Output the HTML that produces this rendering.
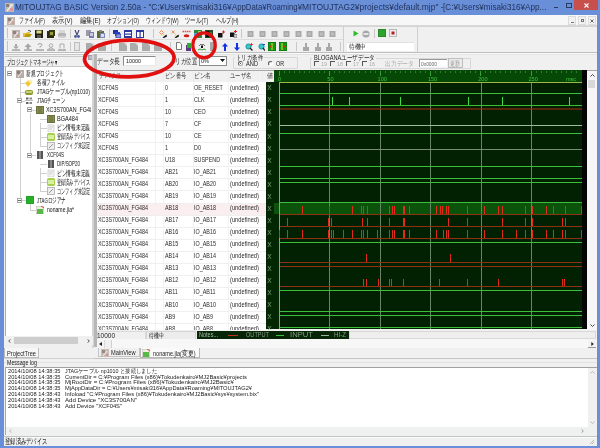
<!DOCTYPE html>
<html><head><meta charset="utf-8">
<style>
*{margin:0;padding:0;box-sizing:border-box}
html,body{width:600px;height:448px;overflow:hidden}
body{position:relative;background:#6a8fd9;font-family:"Liberation Sans",sans-serif;color:#222}
.a{position:absolute}
.t{position:absolute;white-space:nowrap;line-height:1}
.ui{font-size:6.5px;color:#333;transform:scaleX(.85);transform-origin:0 0}
.tb{font-size:6.5px;color:#222;transform:scaleX(.86);transform-origin:0 0}
.lg{font-size:6px;color:#222;transform:scaleX(.95);transform-origin:0 0}
.ic{position:absolute;width:8px;height:8px}
.gt{font-size:6.5px;color:#2a2a2a;transform:scaleX(.83);transform-origin:0 0}
#wrap{position:absolute;left:0;top:0;width:600px;height:448px;filter:blur(0.4px)}
</style></head><body><div id="wrap">

<svg class="a" style="left:5px;top:3px" width="9" height="9" viewBox="0 0 9 9"><rect width="9" height="9" fill="#c4b8b0"/><rect x="1" y="1" width="3" height="3" fill="#8a7f7a"/><path d="M2 8L7 2" stroke="#f4f0f0" stroke-width="1.2"/><rect x="5" y="5" width="3" height="3" fill="#d89a9a"/><rect x="5" y="1" width="3" height="2" fill="#e8e0d8"/></svg>
<div class="t" w="216.7" style="left:15px;top:3.2px;font-size:8.8px;color:#1f3057">MITOUJTAG BASIC Version 2.50a - "C:¥Users¥misaki316¥</div>
<div class="t" w="70.0" style="left:231.7px;top:3.2px;font-size:8.8px;color:#1f3057">AppData¥Roaming¥</div>
<div class="t" w="141.6" style="left:301.7px;top:3.2px;font-size:8.8px;color:#1f3057">MITOUJTAG2¥projects¥default.mjp" - </div>
<div class="t" w="103.4" style="left:443.3px;top:3.2px;font-size:8.8px;color:#1f3057">[C:¥Users¥misaki316¥App...</div>
<div class="a" style="left:553.5px;top:6.5px;width:4px;height:1.5px;background:#2a3a60"></div>
<div class="a" style="left:565.5px;top:3px;width:6px;height:5px;border:1px solid #2a3a60;border-top-width:1.5px"></div>
<div class="a" style="left:573.5px;top:0;width:24px;height:10.3px;background:#c8504c"></div>
<svg class="a" style="left:583.5px;top:3px" width="5" height="5"><path d="M0.5 0.5L4.5 4.5M4.5 0.5L0.5 4.5" stroke="#fff" stroke-width="1.1"/></svg>
<div class="a" style="left:4px;top:15px;width:592.8px;height:431px;background:#f0f0f0"></div>
<div class="a" style="left:4px;top:15px;width:592.8px;height:11px;background:#f7f7f7;border-bottom:1px solid #d8d8d8"></div>
<svg class="a" style="left:7px;top:16.5px" width="8" height="8" viewBox="0 0 8 8"><rect width="8" height="8" fill="#c0b4ac"/><rect x="1" y="1" width="3" height="3" fill="#8a7f7a"/><path d="M2 7L6 2" stroke="#f4f0f0" stroke-width="1.1"/><rect x="5" y="5" width="2" height="2" fill="#d89a9a"/></svg>
<div class="t" w="25.75" style="left:18.75px;top:17.3px;font-size:7.8px;color:#1a1a1a">ファイル(F)</div>
<div class="t" w="20.5" style="left:52px;top:17.3px;font-size:7.8px;color:#1a1a1a">表示(V)</div>
<div class="t" w="20.5" style="left:79.5px;top:17.3px;font-size:7.8px;color:#1a1a1a">編集(E)</div>
<div class="t" w="31.75" style="left:107px;top:17.3px;font-size:7.8px;color:#1a1a1a">オプション(O)</div>
<div class="t" w="32.5" style="left:145.8px;top:17.3px;font-size:7.8px;color:#1a1a1a">ウィンドウ(W)</div>
<div class="t" w="23.3" style="left:185px;top:17.3px;font-size:7.8px;color:#1a1a1a">ツール(T)</div>
<div class="t" w="22.5" style="left:215.8px;top:17.3px;font-size:7.8px;color:#1a1a1a">ヘルプ(H)</div>
<div class="a" style="left:568.3px;top:16px;width:8px;height:9px;background:#f2f2f2;border:1px solid #dcdcdc"></div>
<div class="a" style="left:577.7px;top:16px;width:8px;height:9px;background:#f2f2f2;border:1px solid #dcdcdc"></div>
<div class="a" style="left:587.7px;top:16px;width:8px;height:9px;background:#f2f2f2;border:1px solid #dcdcdc"></div>
<div class="a" style="left:570.5px;top:22px;width:3.5px;height:1px;background:#777"></div>
<div class="a" style="left:580.5px;top:18.5px;width:3.5px;height:3.5px;border:1px solid #777"></div>
<svg class="a" style="left:590px;top:18.5px" width="4" height="4"><path d="M0.5 0.5L3.5 3.5M3.5 0.5L0.5 3.5" stroke="#555" stroke-width="0.9"/></svg>
<div class="a" style="left:4px;top:26px;width:592.8px;height:1px;background:#d4d4d4"></div>
<div class="a" style="left:4px;top:39px;width:339px;height:1px;background:#dcdcdc"></div>
<div class="a" style="left:4px;top:52px;width:592.8px;height:1px;background:#bdbdbd"></div>
<div class="a" style="left:4px;top:53px;width:592.8px;height:1px;background:#fafafa"></div>
<div class="a" style="left:6.5px;top:28px;width:1px;height:10px;background:#c4c4c4"></div>
<div class="a" style="left:6.5px;top:41px;width:1px;height:10px;background:#c4c4c4"></div>
<div class="a" style="left:342.5px;top:27px;width:1px;height:25px;background:#cfcfcf"></div>
<div class="a" style="left:416.5px;top:27px;width:1px;height:25px;background:#cfcfcf"></div>
<div class="a" style="left:69.5px;top:29px;width:1px;height:9px;background:#c8c8c8"></div>
<div class="a" style="left:108.5px;top:29px;width:1px;height:9px;background:#c8c8c8"></div>
<div class="a" style="left:152.5px;top:29px;width:1px;height:9px;background:#c8c8c8"></div>
<div class="a" style="left:241px;top:29px;width:1px;height:9px;background:#c8c8c8"></div>
<div class="a" style="left:69.5px;top:42px;width:1px;height:9px;background:#c8c8c8"></div>
<div class="a" style="left:111px;top:42px;width:1px;height:9px;background:#c8c8c8"></div>
<div class="a" style="left:170px;top:42px;width:1px;height:9px;background:#c8c8c8"></div>
<div class="a" style="left:295.5px;top:42px;width:1px;height:9px;background:#c8c8c8"></div>
<div class="a" style="left:340px;top:42px;width:1px;height:9px;background:#c8c8c8"></div>
<div class="a" style="left:373.5px;top:29px;width:1px;height:9px;background:#c8c8c8"></div>
<svg class="a" style="left:11.5px;top:29.5px" width="8" height="8" viewBox="0 0 8 8"><rect x="0" y="0" width="8" height="8" fill="#bdb2ac"/><rect x="1" y="1" width="3" height="3" fill="#8f8580"/><path d="M2 7L6 2" stroke="#fff" stroke-width="1"/><rect x="5" y="5" width="2" height="2" fill="#d09090"/></svg>
<svg class="a" style="left:23px;top:29.5px" width="9" height="8" viewBox="0 0 9 8"><path d="M0 3H3L4 2H7V7H0Z" fill="#e2c23a"/><path d="M1 7L3 4H9L7 7Z" fill="#b59a10"/><path d="M5 0L8 1.5" stroke="#333" stroke-width="1"/></svg>
<svg class="a" style="left:35px;top:29.5px" width="8" height="8" viewBox="0 0 8 8"><rect x="0" y="0" width="8" height="8" fill="#202010"/><rect x="1.5" y="0.5" width="5" height="3" fill="#d8d880"/><rect x="2" y="5" width="4" height="3" fill="#555"/></svg>
<svg class="a" style="left:47px;top:29.5px" width="8" height="8" viewBox="0 0 8 8"><rect x="0" y="1" width="7" height="7" fill="#2a2a10"/><rect x="2" y="0" width="6" height="6" fill="#3b3b12"/><rect x="3" y="2" width="3" height="3" fill="#9a9a40"/></svg>
<svg class="a" style="left:58px;top:29.5px" width="8" height="8" viewBox="0 0 8 8"><rect x="1" y="0" width="6" height="3" fill="#d8d8d8"/><rect x="0" y="3" width="8" height="4" rx="1" fill="#b6b6b6"/><rect x="1" y="6" width="6" height="2" fill="#cfcfcf"/></svg>
<svg class="a" style="left:73.5px;top:29.5px" width="6" height="8" viewBox="0 0 6 8"><path d="M1 0L3 5L5 0" stroke="#4a4a7a" stroke-width="1.2" fill="none"/><circle cx="1.5" cy="6.5" r="1.4" fill="#4d5a9a"/><circle cx="4.5" cy="6.5" r="1.4" fill="#4d5a9a"/></svg>
<svg class="a" style="left:85.5px;top:29.5px" width="8" height="8" viewBox="0 0 8 8"><rect x="0" y="0" width="5" height="6" fill="#9a9aa8"/><rect x="3" y="2" width="5" height="6" fill="#7b7bb0"/><rect x="4" y="3" width="3" height="3" fill="#c8c8e0"/></svg>
<svg class="a" style="left:97px;top:29.5px" width="8" height="8" viewBox="0 0 8 8"><rect x="0" y="1" width="7" height="7" fill="#5d6a30"/><rect x="2" y="0" width="3" height="2" fill="#888"/><rect x="3" y="3" width="5" height="5" fill="#7c8ab8"/><rect x="4" y="4" width="3" height="3" fill="#dde"/></svg>
<svg class="a" style="left:113px;top:29.5px" width="8" height="8" viewBox="0 0 8 8"><rect x="0" y="0" width="5" height="4" fill="#2233aa"/><rect x="2" y="2" width="5" height="4" fill="#3344bb"/><rect x="3" y="4" width="5" height="4" fill="#8899dd" stroke="#2233aa" stroke-width="0.8"/></svg>
<svg class="a" style="left:124px;top:29.5px" width="8" height="8" viewBox="0 0 8 8"><rect x="0.5" y="0.5" width="7" height="7" fill="#fff" stroke="#2a3aa0"/><rect x="0" y="0" width="8" height="2" fill="#2a3aa0"/><rect x="0" y="3.5" width="8" height="1.2" fill="#2a3aa0"/><rect x="0" y="6" width="8" height="2" fill="#2a3aa0"/></svg>
<svg class="a" style="left:135.5px;top:29.5px" width="8" height="8" viewBox="0 0 8 8"><rect x="0.5" y="0.5" width="7" height="7" fill="#fff" stroke="#2a3aa0"/><rect x="0" y="0" width="8" height="2" fill="#2a3aa0"/><rect x="3.5" y="0" width="1.2" height="8" fill="#2a3aa0"/></svg>
<svg class="a" style="left:158.5px;top:29.5px" width="8" height="8" viewBox="0 0 8 8"><path d="M2.5 0.5L4.5 2.5L2.5 4.5L0.5 2.5Z" fill="none" stroke="#f08040" stroke-width="0.9"/><path d="M3.5 7.5L7.5 4.5L8 6.5L5 8Z" fill="#111"/><path d="M3 5L5 4L5.5 5.5Z" fill="#f0d020"/></svg>
<svg class="a" style="left:170.5px;top:29.5px" width="8" height="8" viewBox="0 0 8 8"><path d="M0.5 0.5L3.5 3.5M3.5 0.5L0.5 3.5" stroke="#f08040" stroke-width="0.9"/><path d="M3.5 7.5L7.5 4.5L8 6.5L5 8Z" fill="#111"/><path d="M3 5L5 4L5.5 5.5Z" fill="#f0d020"/></svg>
<svg class="a" style="left:181.5px;top:29.5px" width="9" height="8" viewBox="0 0 9 8"><path d="M0.5 1.5H8.5" stroke="#e85050" stroke-width="1.4" stroke-dasharray="1.6 0.6"/><ellipse cx="4.5" cy="5.8" rx="2.8" ry="1.5" fill="#d81818"/></svg>
<svg class="a" style="left:193.5px;top:29.5px" width="8" height="8" viewBox="0 0 8 8"><rect x="0" y="0" width="8" height="8" fill="#2a8a3a"/><rect x="0" y="3" width="3" height="5" fill="#4aa0e0"/><rect x="4" y="1" width="3" height="3" fill="#9ad07a"/></svg>
<svg class="a" style="left:204.5px;top:29.5px" width="8" height="8" viewBox="0 0 8 8"><rect x="0" y="0" width="8" height="8" fill="#234a23"/><rect x="1" y="1" width="3" height="6" fill="#111"/><rect x="5" y="2" width="2" height="4" fill="#3d7a3d"/></svg>
<svg class="a" style="left:216.5px;top:29.5px" width="8" height="8" viewBox="0 0 8 8"><rect x="1" y="3" width="4.5" height="4.5" fill="#111"/><path d="M6.5 0.5V3.5M5 2H8" stroke="#e02020" stroke-width="1"/></svg>
<svg class="a" style="left:228.5px;top:29.5px" width="8" height="8" viewBox="0 0 8 8"><rect x="1" y="2.5" width="4.5" height="4.5" fill="#111"/><path d="M6.5 0V3M5 1.5H8" stroke="#e02020" stroke-width="1"/><rect x="5" y="4.5" width="3" height="3.5" fill="#ccc" stroke="#666" stroke-width="0.6"/></svg>
<svg class="a" style="left:246.5px;top:29.5px" width="7" height="8" viewBox="0 0 7 8"><rect x="0.5" y="1" width="6" height="6" fill="#a8a8a8"/><rect x="2" y="2.5" width="3" height="3" fill="#bdbdbd"/></svg>
<svg class="a" style="left:258.5px;top:29.5px" width="7" height="8" viewBox="0 0 7 8"><rect x="0.5" y="1" width="6" height="6" fill="#a8a8a8"/><rect x="2" y="2.5" width="3" height="3" fill="#bdbdbd"/></svg>
<svg class="a" style="left:271px;top:29.5px" width="7" height="8" viewBox="0 0 7 8"><rect x="0.5" y="1" width="6" height="6" fill="#a8a8a8"/><rect x="2" y="2.5" width="3" height="3" fill="#bdbdbd"/></svg>
<svg class="a" style="left:283px;top:29.5px" width="7" height="8" viewBox="0 0 7 8"><rect x="0.5" y="1" width="6" height="6" fill="#a8a8a8"/><rect x="2" y="2.5" width="3" height="3" fill="#bdbdbd"/></svg>
<svg class="a" style="left:294.5px;top:29.5px" width="7" height="8" viewBox="0 0 7 8"><rect x="0.5" y="1" width="6" height="6" fill="#a8a8a8"/><rect x="2" y="2.5" width="3" height="3" fill="#bdbdbd"/></svg>
<svg class="a" style="left:306px;top:29.5px" width="7" height="8" viewBox="0 0 7 8"><rect x="0.5" y="1" width="6" height="6" fill="#a8a8a8"/><rect x="2" y="2.5" width="3" height="3" fill="#bdbdbd"/></svg>
<svg class="a" style="left:317.5px;top:29.5px" width="7" height="8" viewBox="0 0 7 8"><rect x="0.5" y="1" width="6" height="6" fill="#a8a8a8"/><rect x="2" y="2.5" width="3" height="3" fill="#bdbdbd"/></svg>
<svg class="a" style="left:329px;top:29.5px" width="7" height="8" viewBox="0 0 7 8"><rect x="0.5" y="1" width="6" height="6" fill="#a8a8a8"/><rect x="2" y="2.5" width="3" height="3" fill="#bdbdbd"/></svg>
<svg class="a" style="left:353px;top:30.0px" width="6" height="7" viewBox="0 0 6 7"><path d="M0.5 0.5L5.5 3.5L0.5 6.5Z" fill="#28c028"/></svg>
<svg class="a" style="left:361.5px;top:29.5px" width="8" height="8" viewBox="0 0 8 8"><circle cx="4" cy="4" r="3.6" fill="#a8a8a8"/><rect x="1.5" y="3.3" width="5" height="1.4" fill="#fff"/></svg>
<svg class="a" style="left:377.5px;top:29.0px" width="8" height="8" viewBox="0 0 8 8"><rect x="0" y="0" width="8" height="8" rx="1" fill="#2ea32e" stroke="#1c6c1c" stroke-width="0.8"/></svg>
<svg class="a" style="left:388.5px;top:29.0px" width="8" height="8" viewBox="0 0 8 8"><rect x="0.5" y="0.5" width="7" height="7" fill="#eee" stroke="#aaa" stroke-width="0.8"/><rect x="2.5" y="2.5" width="3" height="3" fill="#b81e1e"/></svg>
<svg class="a" style="left:11.5px;top:42.5px" width="8" height="8" viewBox="0 0 8 8"><rect x="3" y="1" width="2" height="2.5" fill="#a4a4a4"/><path d="M1 3.5H7L4 6Z" fill="#a4a4a4"/><rect x="0" y="6.3" width="8" height="1.5" fill="#a4a4a4"/></svg>
<svg class="a" style="left:23.5px;top:42.5px" width="8" height="8" viewBox="0 0 8 8"><path d="M4 0.5L7.5 4H0.5Z" fill="#a4a4a4"/><rect x="2.8" y="4" width="2.4" height="2.3" fill="#a4a4a4"/><rect x="0" y="6.3" width="8" height="1.5" fill="#a4a4a4"/></svg>
<svg class="a" style="left:35.5px;top:42.5px" width="8" height="8" viewBox="0 0 8 8"><path d="M2 2Q2 0.5 4 0.5Q6 0.5 6 2Q6 3 4 3.6V4.6" stroke="#a4a4a4" stroke-width="1" fill="none"/><rect x="0" y="6.3" width="8" height="1.5" fill="#a4a4a4"/></svg>
<svg class="a" style="left:47px;top:42.5px" width="8" height="8" viewBox="0 0 8 8"><circle cx="4" cy="2.6" r="1.8" stroke="#a4a4a4" stroke-width="0.9" fill="none"/><path d="M1.5 5.8Q4 3.8 6.5 5.8" stroke="#a4a4a4" stroke-width="0.9" fill="none"/><rect x="0" y="6.3" width="8" height="1.5" fill="#a4a4a4"/></svg>
<svg class="a" style="left:58px;top:42.5px" width="8" height="8" viewBox="0 0 8 8"><path d="M2 5.5V1H6V5.5" stroke="#a4a4a4" stroke-width="0.9" fill="none"/><rect x="0" y="6.3" width="8" height="1.5" fill="#a4a4a4"/></svg>
<svg class="a" style="left:74px;top:42.0px" width="6" height="9" viewBox="0 0 6 9"><rect x="0.5" y="0.5" width="5" height="8" fill="#e6e6e6" stroke="#bcbcbc"/></svg>
<svg class="a" style="left:86px;top:42.5px" width="8" height="8" viewBox="0 0 8 8"><rect x="0" y="0" width="8" height="8" fill="#ababab"/><path d="M5 0L8 3V0Z" fill="#ddd"/></svg>
<svg class="a" style="left:97.5px;top:42.5px" width="8" height="8" viewBox="0 0 8 8"><rect x="0" y="0" width="8" height="8" fill="#ababab"/><path d="M5 0L8 3V0Z" fill="#ddd"/></svg>
<svg class="a" style="left:118.5px;top:42.5px" width="8" height="8" viewBox="0 0 8 8"><rect x="0" y="0" width="8" height="8" fill="#ababab"/><path d="M5 0L8 3V0Z" fill="#ddd"/></svg>
<svg class="a" style="left:130px;top:42.5px" width="8" height="8" viewBox="0 0 8 8"><rect x="0" y="0" width="8" height="8" fill="#ababab"/><path d="M5 0L8 3V0Z" fill="#ddd"/></svg>
<svg class="a" style="left:142px;top:42.5px" width="8" height="8" viewBox="0 0 8 8"><rect x="0" y="0" width="8" height="8" fill="#ababab"/><path d="M5 0L8 3V0Z" fill="#ddd"/></svg>
<svg class="a" style="left:153.5px;top:42.5px" width="8" height="8" viewBox="0 0 8 8"><rect x="0" y="0" width="8" height="8" fill="#ababab"/><path d="M5 0L8 3V0Z" fill="#ddd"/></svg>
<svg class="a" style="left:175.5px;top:42.0px" width="6" height="8" viewBox="0 0 6 8"><path d="M0.5 0.5H3.8L5.5 2.2V7.5H0.5Z" fill="#fff" stroke="#555" stroke-width="0.8"/></svg>
<svg class="a" style="left:186px;top:42.5px" width="6" height="8" viewBox="0 0 6 8"><rect x="0" y="2" width="5" height="6" fill="#5a3a8a"/><rect x="1" y="0" width="4" height="5" fill="#33aa33"/></svg>
<svg class="a" style="left:198px;top:42.5px" width="8" height="8" viewBox="0 0 8 8"><path d="M1 3L3 1L4 3L5 1L7 3" stroke="#333" stroke-width="0.7" fill="none"/><rect x="3" y="3" width="2" height="2" fill="#111"/><path d="M0 7L2 6L4 7L6 6L8 7" stroke="#33a033" stroke-width="1" fill="none"/></svg>
<svg class="a" style="left:210px;top:42.0px" width="4" height="9" viewBox="0 0 4 9"><rect x="0" y="0" width="4" height="9" fill="#a8a8a8"/></svg>
<svg class="a" style="left:222px;top:42.5px" width="6" height="8" viewBox="0 0 6 8"><path d="M3 0L6 3.5H4V8H2V3.5H0Z" fill="#1230e0"/></svg>
<svg class="a" style="left:233.5px;top:42.5px" width="6" height="8" viewBox="0 0 6 8"><path d="M3 8L6 4.5H4V0H2V4.5H0Z" fill="#1230e0"/></svg>
<svg class="a" style="left:245px;top:42.5px" width="8" height="8" viewBox="0 0 8 8"><circle cx="3.5" cy="3.5" r="2.6" fill="#38c8c8" stroke="#1a8a9a" stroke-width="0.9"/><path d="M5 5L7.5 7.5" stroke="#222" stroke-width="1.3"/><path d="M6.5 0V3M5 1.5H8" stroke="#e03030" stroke-width="0.9"/></svg>
<svg class="a" style="left:257.5px;top:42.5px" width="7" height="8" viewBox="0 0 7 8"><circle cx="3.5" cy="3.5" r="2.6" fill="#38c8c8" stroke="#1a8a9a" stroke-width="0.9"/><path d="M5 5L7 7.5" stroke="#222" stroke-width="1.3"/><path d="M4.5 1.5H7" stroke="#2030c0" stroke-width="0.9"/></svg>
<svg class="a" style="left:267.5px;top:42.0px" width="8" height="9" viewBox="0 0 8 9"><rect x="0" y="0" width="8" height="9" fill="#109a10" stroke="#0a5a0a" stroke-width="0.7"/><rect x="3.5" y="1" width="1" height="7" fill="#f0e040"/><path d="M1 4.5L3.5 3V6Z" fill="#e02020"/></svg>
<svg class="a" style="left:279px;top:42.0px" width="8" height="9" viewBox="0 0 8 9"><rect x="0" y="0" width="8" height="9" fill="#109a10" stroke="#0a5a0a" stroke-width="0.7"/><rect x="2.5" y="1" width="1" height="7" fill="#f0e040"/><path d="M7 4.5L4 3V6Z" fill="#e02020"/></svg>
<svg class="a" style="left:301.5px;top:42.5px" width="8" height="8" viewBox="0 0 8 8"><rect x="3" y="0" width="2" height="4" fill="#a8a8a8"/><rect x="1" y="4" width="6" height="4" fill="#a8a8a8"/></svg>
<svg class="a" style="left:313.5px;top:42.5px" width="8" height="8" viewBox="0 0 8 8"><rect x="3" y="0" width="2" height="4" fill="#a8a8a8"/><rect x="1" y="4" width="6" height="4" fill="#a8a8a8"/></svg>
<svg class="a" style="left:325px;top:42.5px" width="8" height="8" viewBox="0 0 8 8"><rect x="3" y="0" width="2" height="4" fill="#a8a8a8"/><rect x="1" y="4" width="6" height="4" fill="#a8a8a8"/></svg>
<div class="a" style="left:347px;top:42px;width:67px;height:9px;background:#fff;border-top:1px solid #e0e0e0"></div>
<div class="t" w="17" style="left:348.5px;top:43px;font-size:7px;color:#222">待機中</div>
<div class="a" style="left:5px;top:54px;width:83px;height:1px;background:#c8c8c8"></div>
<div class="a" style="left:5px;top:56px;width:83px;height:1px;background:#c8c8c8"></div>
<div class="a" style="left:88px;top:54.5px;width:5px;height:5px;background:#b8b8c8;border:1px solid #9a9aaa"></div>
<div class="t" w="50" style="left:7px;top:59px;font-size:7.6px;color:#111">プロジェクトマネージャ▾</div>
<div class="a" style="left:4px;top:66px;width:89px;height:1px;background:#c9c9c9"></div>
<div class="a" style="left:4.5px;top:66.5px;width:88px;height:269px;background:#fff"></div>
<div class="a" style="left:5px;top:66.5px;width:1px;height:269px;background:#ababab"></div>
<div class="a" style="left:92px;top:54px;width:2px;height:294px;background:#d4d4d4"></div>
<div class="a" style="left:19.5px;top:77.5px;width:1px;height:122.98000000000002px;background:#d0d0d0"></div>
<div class="a" style="left:29.5px;top:112.78px;width:1px;height:42.349999999999994px;background:#d0d0d0"></div>
<div class="a" style="left:39.5px;top:122.85px;width:1px;height:23.210000000000008px;background:#d0d0d0"></div>
<div class="a" style="left:39.5px;top:168.2px;width:1px;height:23.210000000000008px;background:#d0d0d0"></div>
<div class="a" style="left:19.5px;top:82.57px;width:5.5px;height:1px;background:#d0d0d0"></div>
<div class="a" style="left:19.5px;top:91.64px;width:5.5px;height:1px;background:#d0d0d0"></div>
<div class="a" style="left:22px;top:100.71000000000001px;width:3px;height:1px;background:#d0d0d0"></div>
<div class="a" style="left:32px;top:109.78px;width:4px;height:1px;background:#d0d0d0"></div>
<div class="a" style="left:39.5px;top:118.85px;width:7.5px;height:1px;background:#d0d0d0"></div>
<div class="a" style="left:39.5px;top:127.92px;width:7.5px;height:1px;background:#d0d0d0"></div>
<div class="a" style="left:39.5px;top:136.99px;width:7.5px;height:1px;background:#d0d0d0"></div>
<div class="a" style="left:39.5px;top:146.06px;width:7.5px;height:1px;background:#d0d0d0"></div>
<div class="a" style="left:32px;top:155.13px;width:4px;height:1px;background:#d0d0d0"></div>
<div class="a" style="left:39.5px;top:164.2px;width:7.5px;height:1px;background:#d0d0d0"></div>
<div class="a" style="left:39.5px;top:173.27px;width:7.5px;height:1px;background:#d0d0d0"></div>
<div class="a" style="left:39.5px;top:182.34px;width:7.5px;height:1px;background:#d0d0d0"></div>
<div class="a" style="left:39.5px;top:191.41px;width:7.5px;height:1px;background:#d0d0d0"></div>
<div class="a" style="left:22px;top:200.48000000000002px;width:4px;height:1px;background:#d0d0d0"></div>
<div class="a" style="left:29.5px;top:204.48000000000002px;width:1px;height:5.069999999999993px;background:#d0d0d0"></div>
<div class="a" style="left:29.5px;top:209.55px;width:6.5px;height:1px;background:#d0d0d0"></div>
<div class="a" style="left:7.0px;top:71.0px;width:5px;height:5px;border:1px solid #a8a8a8;background:#fff"></div>
<div class="a" style="left:8.0px;top:73.0px;width:3px;height:1px;background:#666"></div>
<div class="a" style="left:17.0px;top:98.21000000000001px;width:5px;height:5px;border:1px solid #a8a8a8;background:#fff"></div>
<div class="a" style="left:18.0px;top:100.21000000000001px;width:3px;height:1px;background:#666"></div>
<div class="a" style="left:27.0px;top:107.28px;width:5px;height:5px;border:1px solid #a8a8a8;background:#fff"></div>
<div class="a" style="left:28.0px;top:109.28px;width:3px;height:1px;background:#666"></div>
<div class="a" style="left:27.0px;top:152.63px;width:5px;height:5px;border:1px solid #a8a8a8;background:#fff"></div>
<div class="a" style="left:28.0px;top:154.63px;width:3px;height:1px;background:#666"></div>
<div class="a" style="left:17.0px;top:197.98000000000002px;width:5px;height:5px;border:1px solid #a8a8a8;background:#fff"></div>
<div class="a" style="left:18.0px;top:199.98000000000002px;width:3px;height:1px;background:#666"></div>
<svg class="a" style="left:16px;top:69.5px" width="8" height="8" viewBox="0 0 8 8"><rect width="8" height="8" fill="#b8aca6"/><rect x="1" y="1" width="3" height="3" fill="#8a807a"/><path d="M2 7L6 2" stroke="#eee"/></svg>
<div class="a" style="left:26px;top:69.5px;width:65px;height:9px;overflow:hidden"><div class="t" w="38" style="left:0;top:0.3px;font-size:7.6px;color:#111">新規プロジェクト</div></div>
<svg class="a" style="left:25px;top:78.57px" width="8" height="8" viewBox="0 0 8 8"><path d="M0 4L4 1L7 3L3 8Z" fill="#f0c830"/><path d="M3 2L6 0L8 2L5 4Z" fill="#f8f0c0"/></svg>
<div class="a" style="left:37px;top:78.57px;width:54px;height:9px;overflow:hidden"><div class="t" w="28" style="left:0;top:0.3px;font-size:7.6px;color:#111">各種ファイル</div></div>
<svg class="a" style="left:25px;top:88.64px" width="8" height="6" viewBox="0 0 8 6"><rect x="0" y="1" width="8" height="5" rx="2" fill="#8a9a30"/><rect x="1" y="2" width="6" height="2" fill="#c8d070"/></svg>
<div class="a" style="left:37px;top:87.64px;width:54px;height:9px;overflow:hidden"><div class="t" w="53" style="left:0;top:0.3px;font-size:7.6px;color:#111">JTAGケーブル(np1010)</div></div>
<svg class="a" style="left:25px;top:96.71000000000001px" width="8" height="8" viewBox="0 0 8 8"><rect x="1" y="0.5" width="2.5" height="2" fill="#666"/><rect x="4.5" y="0.5" width="2.5" height="2" fill="#888"/><rect x="1" y="5" width="2.5" height="2" fill="#666"/><rect x="4.5" y="5" width="2.5" height="2" fill="#888"/><rect x="0" y="3" width="8" height="1" fill="#bbb"/></svg>
<div class="a" style="left:37px;top:96.71000000000001px;width:54px;height:9px;overflow:hidden"><div class="t" w="28" style="left:0;top:0.3px;font-size:7.6px;color:#111">JTAGチェーン</div></div>
<svg class="a" style="left:36px;top:105.78px" width="8" height="8" viewBox="0 0 8 8"><rect width="8" height="8" fill="#6a7040"/><rect x="1" y="1" width="6" height="6" fill="#8a9050"/><path d="M2 2H6M2 4H6M2 6H6" stroke="#5a6030" stroke-width="0.7"/></svg>
<div class="a" style="left:46px;top:105.78px;width:45px;height:9px;overflow:hidden"><div class="t" w="50" style="left:0;top:0.3px;font-size:7.6px;color:#111">XC3S700AN_FG484</div></div>
<svg class="a" style="left:47px;top:114.85px" width="8" height="8" viewBox="0 0 8 8"><rect width="8" height="8" fill="#6a7040"/><rect x="1" y="1" width="6" height="6" fill="#8a9050"/><path d="M2 2H6M2 4H6M2 6H6" stroke="#5a6030" stroke-width="0.7"/></svg>
<div class="a" style="left:57px;top:114.85px;width:34px;height:9px;overflow:hidden"><div class="t" w="21" style="left:0;top:0.3px;font-size:7.6px;color:#111">BGA484</div></div>
<svg class="a" style="left:47px;top:123.92px" width="8" height="8" viewBox="0 0 8 8"><rect x="1" y="1" width="6" height="7" fill="#f4f4f4" stroke="#c8c8c8" stroke-width="0.7"/><path d="M2 3H6M2 5H5" stroke="#bbb" stroke-width="0.7"/></svg>
<div class="a" style="left:57px;top:123.92px;width:34px;height:9px;overflow:hidden"><div class="t" w="33" style="left:0;top:0.3px;font-size:7.6px;color:#111">ピン情報未定義</div></div>
<svg class="a" style="left:47px;top:132.99px" width="8" height="8" viewBox="0 0 8 8"><rect width="8" height="8" rx="1.5" fill="#a8d050"/><rect x="1" y="2" width="6" height="4" fill="#d8f0a0"/></svg>
<div class="a" style="left:57px;top:132.99px;width:34px;height:9px;overflow:hidden"><div class="t" w="33" style="left:0;top:0.3px;font-size:7.6px;color:#111">登録済みデバイス</div></div>
<svg class="a" style="left:47px;top:142.06px" width="8" height="8" viewBox="0 0 8 8"><rect x="0.5" y="0.5" width="7" height="7" fill="#eee" stroke="#aaa" stroke-width="0.8"/><path d="M2 6L6 2" stroke="#999"/></svg>
<div class="a" style="left:57px;top:142.06px;width:34px;height:9px;overflow:hidden"><div class="t" w="33" style="left:0;top:0.3px;font-size:7.6px;color:#111">コンフィグ未設定</div></div>
<svg class="a" style="left:37px;top:151.13px" width="6" height="8" viewBox="0 0 6 8"><rect width="6" height="8" fill="#555"/><rect x="2" y="0" width="2" height="8" fill="#888"/></svg>
<div class="a" style="left:47px;top:151.13px;width:44px;height:9px;overflow:hidden"><div class="t" w="17" style="left:0;top:0.3px;font-size:7.6px;color:#111">XCF04S</div></div>
<svg class="a" style="left:48px;top:160.2px" width="6" height="8" viewBox="0 0 6 8"><rect width="6" height="8" fill="#555"/><rect x="2" y="0" width="2" height="8" fill="#888"/></svg>
<div class="a" style="left:57px;top:160.2px;width:34px;height:9px;overflow:hidden"><div class="t" w="23" style="left:0;top:0.3px;font-size:7.6px;color:#111">DIP/SOP20</div></div>
<svg class="a" style="left:47px;top:169.27px" width="8" height="8" viewBox="0 0 8 8"><rect x="1" y="1" width="6" height="7" fill="#f4f4f4" stroke="#c8c8c8" stroke-width="0.7"/><path d="M2 3H6M2 5H5" stroke="#bbb" stroke-width="0.7"/></svg>
<div class="a" style="left:57px;top:169.27px;width:34px;height:9px;overflow:hidden"><div class="t" w="33" style="left:0;top:0.3px;font-size:7.6px;color:#111">ピン情報未定義</div></div>
<svg class="a" style="left:47px;top:178.34px" width="8" height="8" viewBox="0 0 8 8"><rect width="8" height="8" rx="1.5" fill="#a8d050"/><rect x="1" y="2" width="6" height="4" fill="#d8f0a0"/></svg>
<div class="a" style="left:57px;top:178.34px;width:34px;height:9px;overflow:hidden"><div class="t" w="33" style="left:0;top:0.3px;font-size:7.6px;color:#111">登録済みデバイス</div></div>
<svg class="a" style="left:47px;top:187.41px" width="8" height="8" viewBox="0 0 8 8"><rect x="0.5" y="0.5" width="7" height="7" fill="#eee" stroke="#aaa" stroke-width="0.8"/><path d="M2 6L6 2" stroke="#999"/></svg>
<div class="a" style="left:57px;top:187.41px;width:34px;height:9px;overflow:hidden"><div class="t" w="33" style="left:0;top:0.3px;font-size:7.6px;color:#111">コンフィグ未設定</div></div>
<svg class="a" style="left:26px;top:196.48000000000002px" width="8" height="8" viewBox="0 0 8 8"><rect width="8" height="8" rx="1" fill="#28b028" stroke="#1a801a" stroke-width="0.6"/></svg>
<div class="a" style="left:37px;top:196.48000000000002px;width:54px;height:9px;overflow:hidden"><div class="t" w="29" style="left:0;top:0.3px;font-size:7.6px;color:#111">JTAGロジアナ</div></div>
<svg class="a" style="left:36px;top:205.55px" width="8" height="8" viewBox="0 0 8 8"><rect width="8" height="8" fill="#f0f0e0" stroke="#999" stroke-width="0.6"/><rect x="1" y="3" width="6" height="5" fill="#58b848"/><path d="M5 0L8 2" stroke="#e04040"/></svg>
<div class="a" style="left:47px;top:205.55px;width:44px;height:9px;overflow:hidden"><div class="t" w="27" style="left:0;top:0.3px;font-size:7.6px;color:#111">noname.jla*</div></div>
<div class="a" style="left:4.5px;top:335.5px;width:88px;height:9.5px;background:#f0f0f0"></div>
<div class="a" style="left:14px;top:337px;width:63.5px;height:7px;background:#cdcdcd"></div>
<svg class="a" style="left:8px;top:338.5px" width="3" height="4" viewBox="0 0 3 4"><path d="M2.5 0.3L0.7 2L2.5 3.7" stroke="#444" stroke-width="0.9" fill="none"/></svg>
<svg class="a" style="left:87px;top:338.5px" width="3" height="4" viewBox="0 0 3 4"><path d="M0.5 0.3L2.3 2L0.5 3.7" stroke="#444" stroke-width="0.9" fill="none"/></svg>
<div class="a" style="left:4px;top:347.5px;width:35px;height:10px;background:#f6f6f6;border:1px solid #bcbcbc;border-top:none"></div>
<div class="t" w="29" style="left:7px;top:349.5px;font-size:7px;color:#222">ProjectTree</div>
<div class="a" style="left:4px;top:358px;width:592.8px;height:1px;background:#d2d2d2"></div>
<div class="a" style="left:4px;top:362px;width:592.8px;height:1px;background:#e2e2e2"></div>
<div class="t" w="30" style="left:7px;top:360.2px;font-size:6.3px;color:#222">Message log</div>
<div class="a" style="left:5px;top:367px;width:591.8px;height:1px;background:#a0a0a0"></div>
<div class="a" style="left:5px;top:367px;width:1px;height:68px;background:#a8a8a8"></div>
<div class="a" style="left:6px;top:368px;width:581.5px;height:58.5px;background:#fff"></div>
<div class="a" style="left:587.5px;top:368px;width:9px;height:58.5px;background:#f0f0f0"></div>
<svg class="a" style="left:589.5px;top:371px" width="5" height="3" viewBox="0 0 5 3"><path d="M0.5 2.5L2.5 0.5L4.5 2.5" stroke="#aaa" stroke-width="0.8" fill="none"/></svg>
<svg class="a" style="left:589.5px;top:421px" width="5" height="3" viewBox="0 0 5 3"><path d="M0.5 0.5L2.5 2.5L4.5 0.5" stroke="#aaa" stroke-width="0.8" fill="none"/></svg>
<div class="a" style="left:6px;top:426.5px;width:590px;height:8.5px;background:#eff0f0"></div>
<svg class="a" style="left:8.5px;top:428.5px" width="3" height="4" viewBox="0 0 3 4"><path d="M2.5 0.3L0.7 2L2.5 3.7" stroke="#aaa" stroke-width="0.8" fill="none"/></svg>
<svg class="a" style="left:580.5px;top:428.5px" width="3" height="4" viewBox="0 0 3 4"><path d="M0.5 0.3L2.3 2L0.5 3.7" stroke="#888" stroke-width="0.8" fill="none"/></svg>
<div class="a" style="left:4px;top:435.5px;width:592.8px;height:1px;background:#c4c4c4"></div>
<div class="a" style="left:4px;top:436.5px;width:592.8px;height:1px;background:#fafafa"></div>
<div class="t" w="52.5" style="left:7.5px;top:367.6px;font-size:6px;color:#222">2014/10/08 14:38:35</div>
<div class="t" w="92" style="left:64.5px;top:367.6px;font-size:6px;color:#222">JTAGケーブル np1010 と接続しました</div>
<div class="t" w="52.5" style="left:7.5px;top:373.5px;font-size:6px;color:#222">2014/10/08 14:38:35</div>
<div class="t" w="182" style="left:64.5px;top:373.5px;font-size:6px;color:#222">CurrentDir = C:¥Program Files (x86)¥Tokudenkairo¥MJ2Basic¥projects</div>
<div class="t" w="52.5" style="left:7.5px;top:379.40000000000003px;font-size:6px;color:#222">2014/10/08 14:38:35</div>
<div class="t" w="169" style="left:64.5px;top:379.40000000000003px;font-size:6px;color:#222">MjRootDir = C:¥Program Files (x86)¥Tokudenkairo¥MJ2Basic¥</div>
<div class="t" w="52.5" style="left:7.5px;top:385.3px;font-size:6px;color:#222">2014/10/08 14:38:35</div>
<div class="t" w="187" style="left:64.5px;top:385.3px;font-size:6px;color:#222">MjAppDataDir = C:¥Users¥misaki316¥AppData¥Roaming¥MITOUJTAG2¥</div>
<div class="t" w="52.5" style="left:7.5px;top:391.20000000000005px;font-size:6px;color:#222">2014/10/08 14:38:43</div>
<div class="t" w="194" style="left:64.5px;top:391.20000000000005px;font-size:6px;color:#222">Infoload "C:¥Program Files (x86)¥Tokudenkairo¥MJ2Basic¥sys¥system.bix"</div>
<div class="t" w="52.5" style="left:7.5px;top:397.1px;font-size:6px;color:#222">2014/10/08 14:38:43</div>
<div class="t" w="72" style="left:64.5px;top:397.1px;font-size:6px;color:#222">Add Device "XC3S700AN"</div>
<div class="t" w="52.5" style="left:7.5px;top:403.0px;font-size:6px;color:#222">2014/10/08 14:38:43</div>
<div class="t" w="57" style="left:64.5px;top:403.0px;font-size:6px;color:#222">Add Device "XCF04S"</div>
<div class="t" w="42" style="left:5px;top:438.3px;font-size:7.6px;color:#111">登録済みデバイス</div>
<svg class="a" style="left:589px;top:439px" width="6" height="6" viewBox="0 0 6 6"><path d="M5 1L1 5M5 3L3 5M5 5" stroke="#aaa" stroke-width="0.8"/></svg>
<div class="a" style="left:94px;top:54px;width:502.8px;height:1px;background:#e4e4e4"></div>
<div class="a" style="left:94px;top:54px;width:2.5px;height:293px;background:#b6b6b6"></div>
<div class="a" style="left:96.5px;top:70px;width:500.3px;height:1px;background:#a8a8a8"></div>
<div class="t" w="23" style="left:97px;top:57.5px;font-size:8px;color:#222">データ長</div>
<div class="a" style="left:123px;top:56px;width:33px;height:9.5px;background:#fff;border-top:1px solid #8a8a8a;border-left:1px solid #8a8a8a;border-right:1px solid #e8e8e8;border-bottom:1px solid #e8e8e8"></div>
<div class="t" w="15" style="left:125.5px;top:58px;font-size:6px;color:#222">10000</div>
<div class="t" w="27" style="left:170px;top:57.5px;font-size:8px;color:#222">トリガ位置</div>
<div class="a" style="left:199px;top:56px;width:27.5px;height:9.5px;background:#fff;border:1px solid #8a8a8a"></div>
<div class="t" w="8" style="left:201px;top:58px;font-size:6px;color:#222">0%</div>
<svg class="a" style="left:220px;top:59px" width="5" height="3" viewBox="0 0 5 3"><path d="M0 0H5L2.5 3Z" fill="#111"/></svg>
<div class="a" style="left:233px;top:57px;width:65px;height:11.5px;border:1px solid #d8d8d8;border-radius:1px"></div>
<div class="a" style="left:235px;top:54.5px;width:29px;height:5px;background:#f0f0f0"></div>
<div class="t" w="27" style="left:236px;top:54px;font-size:7px;color:#222">トリガ条件</div>
<div class="a" style="left:238px;top:61px;width:5px;height:5px;border-radius:50%;background:#fff;border:1px solid #aaa;border-left-color:#555;border-top-color:#555"></div>
<div class="a" style="left:239.6px;top:62.6px;width:1.8px;height:1.8px;border-radius:50%;background:#222"></div>
<div class="t" w="12" style="left:246px;top:60.5px;font-size:6.5px;color:#222">AND</div>
<div class="a" style="left:268px;top:61px;width:5px;height:5px;border-radius:50%;background:#fff;border:1px solid #fff;border-left-color:#555;border-top-color:#555"></div>
<div class="t" w="8" style="left:276px;top:60.5px;font-size:6.5px;color:#222">OR</div>
<div class="a" style="left:309.5px;top:58px;width:161px;height:10.5px;border:1px solid #d8d8d8"></div>
<div class="a" style="left:312px;top:54.5px;width:64px;height:5px;background:#f0f0f0"></div>
<div class="t" w="61" style="left:313.5px;top:54px;font-size:7px;color:#222">BLOGANAユーザデータ</div>
<div class="a" style="left:314px;top:60.5px;width:5px;height:5.5px;border-top:1.2px solid #555;border-left:1.2px solid #555"></div>
<div class="t" w="6" style="left:320.5px;top:60.5px;font-size:6px;color:#aaa">19</div>
<div class="a" style="left:330px;top:60.5px;width:5px;height:5.5px;border-top:1.2px solid #555;border-left:1.2px solid #555"></div>
<div class="t" w="6" style="left:336.5px;top:60.5px;font-size:6px;color:#aaa">18</div>
<div class="a" style="left:346px;top:60.5px;width:5px;height:5.5px;border-top:1.2px solid #555;border-left:1.2px solid #555"></div>
<div class="t" w="6" style="left:352.5px;top:60.5px;font-size:6px;color:#aaa">17</div>
<div class="a" style="left:362px;top:60.5px;width:5px;height:5.5px;border-top:1.2px solid #555;border-left:1.2px solid #555"></div>
<div class="t" w="6" style="left:368.5px;top:60.5px;font-size:6px;color:#aaa">16</div>
<div class="t" w="29" style="left:385px;top:59.5px;font-size:7px;color:#aaa">出力データ</div>
<div class="a" style="left:419px;top:58.5px;width:27.5px;height:8.5px;background:#fff;border-top:1px solid #999;border-left:1px solid #999"></div>
<div class="t" w="16" style="left:420.5px;top:60.5px;font-size:6px;color:#666">0x0000</div>
<div class="a" style="left:447.5px;top:58px;width:15px;height:9.5px;background:#ececec;border:1px solid #bdbdbd"></div>
<div class="t" w="10" style="left:450px;top:59.5px;font-size:7px;color:#999">更新</div>
<div class="a" style="left:96.5px;top:71px;width:177.5px;height:11px;background:#f1f1f1"></div>
<div class="t" w="22" style="left:99px;top:72.3px;font-size:7px;color:#333">デバイス</div>
<div class="t" w="21" style="left:165px;top:72.3px;font-size:7px;color:#333">ピン番号</div>
<div class="t" w="17" style="left:194px;top:72.3px;font-size:7px;color:#333">ピン名</div>
<div class="t" w="21" style="left:230px;top:72.3px;font-size:7px;color:#333">ユーザ名</div>
<div class="t" w="6" style="left:267px;top:72.3px;font-size:7px;color:#333">値</div>
<div class="a" style="left:96.5px;top:82px;width:169.5px;height:248px;background:#fff"></div>
<div class="a" style="left:96.5px;top:203px;width:169.5px;height:12px;background:#fbeeee"></div>
<div class="a" style="left:155px;top:82px;width:1px;height:248px;background:#f2f2f2"></div>
<div class="a" style="left:163px;top:82px;width:1px;height:248px;background:#f2f2f2"></div>
<div class="a" style="left:193.3px;top:82px;width:1px;height:248px;background:#f2f2f2"></div>
<div class="a" style="left:227.5px;top:82px;width:1px;height:248px;background:#f2f2f2"></div>
<div class="a" style="left:163px;top:72px;width:1px;height:10px;background:#ececec"></div>
<div class="a" style="left:193.3px;top:72px;width:1px;height:10px;background:#ececec"></div>
<div class="a" style="left:227.5px;top:72px;width:1px;height:10px;background:#ececec"></div>
<div class="a" style="left:262px;top:72px;width:1px;height:10px;background:#ececec"></div>
<div class="t gt" style="left:98px;top:84.60px">XCF04S</div>
<div class="t gt" style="left:165px;top:84.60px">0</div>
<div class="t gt" style="left:194.2px;top:84.60px">OE_RESET</div>
<div class="t gt" style="left:230px;top:84.60px;transform:scaleX(.88)">(undefined)</div>
<div class="a" style="left:96.5px;top:94.05px;width:169.5px;height:1px;background:#efefef"></div>
<div class="t gt" style="left:98px;top:96.65px">XCF04S</div>
<div class="t gt" style="left:165px;top:96.65px">1</div>
<div class="t gt" style="left:194.2px;top:96.65px">CLK</div>
<div class="t gt" style="left:230px;top:96.65px;transform:scaleX(.88)">(undefined)</div>
<div class="a" style="left:96.5px;top:106.10px;width:169.5px;height:1px;background:#efefef"></div>
<div class="t gt" style="left:98px;top:108.70px">XCF04S</div>
<div class="t gt" style="left:165px;top:108.70px">10</div>
<div class="t gt" style="left:194.2px;top:108.70px">CEO</div>
<div class="t gt" style="left:230px;top:108.70px;transform:scaleX(.88)">(undefined)</div>
<div class="a" style="left:96.5px;top:118.15px;width:169.5px;height:1px;background:#efefef"></div>
<div class="t gt" style="left:98px;top:120.75px">XCF04S</div>
<div class="t gt" style="left:165px;top:120.75px">7</div>
<div class="t gt" style="left:194.2px;top:120.75px">CF</div>
<div class="t gt" style="left:230px;top:120.75px;transform:scaleX(.88)">(undefined)</div>
<div class="a" style="left:96.5px;top:130.20px;width:169.5px;height:1px;background:#efefef"></div>
<div class="t gt" style="left:98px;top:132.80px">XCF04S</div>
<div class="t gt" style="left:165px;top:132.80px">10</div>
<div class="t gt" style="left:194.2px;top:132.80px">CE</div>
<div class="t gt" style="left:230px;top:132.80px;transform:scaleX(.88)">(undefined)</div>
<div class="a" style="left:96.5px;top:142.25px;width:169.5px;height:1px;background:#efefef"></div>
<div class="t gt" style="left:98px;top:144.85px">XCF04S</div>
<div class="t gt" style="left:165px;top:144.85px">1</div>
<div class="t gt" style="left:194.2px;top:144.85px">D0</div>
<div class="t gt" style="left:230px;top:144.85px;transform:scaleX(.88)">(undefined)</div>
<div class="a" style="left:96.5px;top:154.30px;width:169.5px;height:1px;background:#efefef"></div>
<div class="t gt" style="left:98px;top:156.90px">XC3S700AN_FG484</div>
<div class="t gt" style="left:165px;top:156.90px">U18</div>
<div class="t gt" style="left:194.2px;top:156.90px">SUSPEND</div>
<div class="t gt" style="left:230px;top:156.90px;transform:scaleX(.88)">(undefined)</div>
<div class="a" style="left:96.5px;top:166.35px;width:169.5px;height:1px;background:#efefef"></div>
<div class="t gt" style="left:98px;top:168.95px">XC3S700AN_FG484</div>
<div class="t gt" style="left:165px;top:168.95px">AB21</div>
<div class="t gt" style="left:194.2px;top:168.95px">IO_AB21</div>
<div class="t gt" style="left:230px;top:168.95px;transform:scaleX(.88)">(undefined)</div>
<div class="a" style="left:96.5px;top:178.40px;width:169.5px;height:1px;background:#efefef"></div>
<div class="t gt" style="left:98px;top:181.00px">XC3S700AN_FG484</div>
<div class="t gt" style="left:165px;top:181.00px">AB20</div>
<div class="t gt" style="left:194.2px;top:181.00px">IO_AB20</div>
<div class="t gt" style="left:230px;top:181.00px;transform:scaleX(.88)">(undefined)</div>
<div class="a" style="left:96.5px;top:190.45px;width:169.5px;height:1px;background:#efefef"></div>
<div class="t gt" style="left:98px;top:193.05px">XC3S700AN_FG484</div>
<div class="t gt" style="left:165px;top:193.05px">AB19</div>
<div class="t gt" style="left:194.2px;top:193.05px">IO_AB19</div>
<div class="t gt" style="left:230px;top:193.05px;transform:scaleX(.88)">(undefined)</div>
<div class="a" style="left:96.5px;top:202.50px;width:169.5px;height:1px;background:#efefef"></div>
<div class="t gt" style="left:98px;top:205.10px">XC3S700AN_FG484</div>
<div class="t gt" style="left:165px;top:205.10px">AB18</div>
<div class="t gt" style="left:194.2px;top:205.10px">IO_AB18</div>
<div class="t gt" style="left:230px;top:205.10px;transform:scaleX(.88)">(undefined)</div>
<div class="a" style="left:96.5px;top:214.55px;width:169.5px;height:1px;background:#efefef"></div>
<div class="t gt" style="left:98px;top:217.15px">XC3S700AN_FG484</div>
<div class="t gt" style="left:165px;top:217.15px">AB17</div>
<div class="t gt" style="left:194.2px;top:217.15px">IO_AB17</div>
<div class="t gt" style="left:230px;top:217.15px;transform:scaleX(.88)">(undefined)</div>
<div class="a" style="left:96.5px;top:226.60px;width:169.5px;height:1px;background:#efefef"></div>
<div class="t gt" style="left:98px;top:229.20px">XC3S700AN_FG484</div>
<div class="t gt" style="left:165px;top:229.20px">AB16</div>
<div class="t gt" style="left:194.2px;top:229.20px">IO_AB16</div>
<div class="t gt" style="left:230px;top:229.20px;transform:scaleX(.88)">(undefined)</div>
<div class="a" style="left:96.5px;top:238.65px;width:169.5px;height:1px;background:#efefef"></div>
<div class="t gt" style="left:98px;top:241.25px">XC3S700AN_FG484</div>
<div class="t gt" style="left:165px;top:241.25px">AB15</div>
<div class="t gt" style="left:194.2px;top:241.25px">IO_AB15</div>
<div class="t gt" style="left:230px;top:241.25px;transform:scaleX(.88)">(undefined)</div>
<div class="a" style="left:96.5px;top:250.70px;width:169.5px;height:1px;background:#efefef"></div>
<div class="t gt" style="left:98px;top:253.30px">XC3S700AN_FG484</div>
<div class="t gt" style="left:165px;top:253.30px">AB14</div>
<div class="t gt" style="left:194.2px;top:253.30px">IO_AB14</div>
<div class="t gt" style="left:230px;top:253.30px;transform:scaleX(.88)">(undefined)</div>
<div class="a" style="left:96.5px;top:262.75px;width:169.5px;height:1px;background:#efefef"></div>
<div class="t gt" style="left:98px;top:265.35px">XC3S700AN_FG484</div>
<div class="t gt" style="left:165px;top:265.35px">AB13</div>
<div class="t gt" style="left:194.2px;top:265.35px">IO_AB13</div>
<div class="t gt" style="left:230px;top:265.35px;transform:scaleX(.88)">(undefined)</div>
<div class="a" style="left:96.5px;top:274.80px;width:169.5px;height:1px;background:#efefef"></div>
<div class="t gt" style="left:98px;top:277.40px">XC3S700AN_FG484</div>
<div class="t gt" style="left:165px;top:277.40px">AB12</div>
<div class="t gt" style="left:194.2px;top:277.40px">IO_AB12</div>
<div class="t gt" style="left:230px;top:277.40px;transform:scaleX(.88)">(undefined)</div>
<div class="a" style="left:96.5px;top:286.85px;width:169.5px;height:1px;background:#efefef"></div>
<div class="t gt" style="left:98px;top:289.45px">XC3S700AN_FG484</div>
<div class="t gt" style="left:165px;top:289.45px">AB11</div>
<div class="t gt" style="left:194.2px;top:289.45px">IO_AB11</div>
<div class="t gt" style="left:230px;top:289.45px;transform:scaleX(.88)">(undefined)</div>
<div class="a" style="left:96.5px;top:298.90px;width:169.5px;height:1px;background:#efefef"></div>
<div class="t gt" style="left:98px;top:301.50px">XC3S700AN_FG484</div>
<div class="t gt" style="left:165px;top:301.50px">AB10</div>
<div class="t gt" style="left:194.2px;top:301.50px">IO_AB10</div>
<div class="t gt" style="left:230px;top:301.50px;transform:scaleX(.88)">(undefined)</div>
<div class="a" style="left:96.5px;top:310.95px;width:169.5px;height:1px;background:#efefef"></div>
<div class="t gt" style="left:98px;top:313.55px">XC3S700AN_FG484</div>
<div class="t gt" style="left:165px;top:313.55px">AB9</div>
<div class="t gt" style="left:194.2px;top:313.55px">IO_AB9</div>
<div class="t gt" style="left:230px;top:313.55px;transform:scaleX(.88)">(undefined)</div>
<div class="a" style="left:96.5px;top:323.00px;width:169.5px;height:1px;background:#efefef"></div>
<div class="t gt" style="left:98px;top:325.60px">XC3S700AN_FG484</div>
<div class="t gt" style="left:165px;top:325.60px">AB8</div>
<div class="t gt" style="left:194.2px;top:325.60px">IO_AB8</div>
<div class="t gt" style="left:230px;top:325.60px;transform:scaleX(.88)">(undefined)</div>
<div class="a" style="left:266px;top:82px;width:13px;height:247px;background:#032603"></div>
<div class="a" style="left:274px;top:70.5px;width:5px;height:11.5px;background:#064806"></div>
<div class="t" style="left:267.3px;top:85.30px;font-size:6.5px;color:#86a286">X</div>
<div class="t" style="left:267.3px;top:97.35px;font-size:6.5px;color:#86a286">X</div>
<div class="t" style="left:267.3px;top:109.40px;font-size:6.5px;color:#86a286">X</div>
<div class="t" style="left:267.3px;top:121.45px;font-size:6.5px;color:#86a286">X</div>
<div class="t" style="left:267.3px;top:133.50px;font-size:6.5px;color:#86a286">X</div>
<div class="t" style="left:267.3px;top:145.55px;font-size:6.5px;color:#86a286">X</div>
<div class="t" style="left:267.3px;top:157.60px;font-size:6.5px;color:#86a286">X</div>
<div class="t" style="left:267.3px;top:169.65px;font-size:6.5px;color:#86a286">X</div>
<div class="t" style="left:267.3px;top:181.70px;font-size:6.5px;color:#86a286">X</div>
<div class="t" style="left:267.3px;top:193.75px;font-size:6.5px;color:#86a286">X</div>
<div class="t" style="left:267.3px;top:205.80px;font-size:6.5px;color:#86a286">X</div>
<div class="t" style="left:267.3px;top:217.85px;font-size:6.5px;color:#86a286">X</div>
<div class="t" style="left:267.3px;top:229.90px;font-size:6.5px;color:#86a286">X</div>
<div class="t" style="left:267.3px;top:241.95px;font-size:6.5px;color:#86a286">X</div>
<div class="t" style="left:267.3px;top:254.00px;font-size:6.5px;color:#86a286">X</div>
<div class="t" style="left:267.3px;top:266.05px;font-size:6.5px;color:#86a286">X</div>
<div class="t" style="left:267.3px;top:278.10px;font-size:6.5px;color:#86a286">X</div>
<div class="t" style="left:267.3px;top:290.15px;font-size:6.5px;color:#86a286">X</div>
<div class="t" style="left:267.3px;top:302.20px;font-size:6.5px;color:#86a286">X</div>
<div class="t" style="left:267.3px;top:314.25px;font-size:6.5px;color:#86a286">X</div>
<div class="t" style="left:267.3px;top:326.30px;font-size:6.5px;color:#86a286">X</div>
<svg class="a" style="left:274px;top:70px" width="308" height="259" shape-rendering="crispEdges"><rect x="0" y="0" width="308" height="12" fill="#064806"/><rect x="5" y="12" width="303" height="247" fill="#022002"/><rect x="0" y="133" width="308" height="11" fill="#0b520b"/><rect x="5" y="1" width="1" height="5" fill="#3aa03a"/><rect x="10" y="1" width="1" height="1.5" fill="#2a7e2a"/><rect x="15" y="1" width="1" height="1.5" fill="#2a7e2a"/><rect x="20" y="1" width="1" height="1.5" fill="#2a7e2a"/><rect x="25" y="1" width="1" height="1.5" fill="#2a7e2a"/><rect x="30" y="1" width="1" height="1.5" fill="#2a7e2a"/><rect x="35" y="1" width="1" height="1.5" fill="#2a7e2a"/><rect x="40" y="1" width="1" height="1.5" fill="#2a7e2a"/><rect x="45" y="1" width="1" height="1.5" fill="#2a7e2a"/><rect x="50" y="1" width="1" height="1.5" fill="#2a7e2a"/><rect x="55" y="1" width="1" height="5" fill="#3aa03a"/><rect x="60" y="1" width="1" height="1.5" fill="#2a7e2a"/><rect x="65" y="1" width="1" height="1.5" fill="#2a7e2a"/><rect x="70" y="1" width="1" height="1.5" fill="#2a7e2a"/><rect x="75" y="1" width="1" height="1.5" fill="#2a7e2a"/><rect x="80" y="1" width="1" height="1.5" fill="#2a7e2a"/><rect x="85" y="1" width="1" height="1.5" fill="#2a7e2a"/><rect x="91" y="1" width="1" height="1.5" fill="#2a7e2a"/><rect x="96" y="1" width="1" height="1.5" fill="#2a7e2a"/><rect x="101" y="1" width="1" height="1.5" fill="#2a7e2a"/><rect x="106" y="1" width="1" height="5" fill="#3aa03a"/><rect x="111" y="1" width="1" height="1.5" fill="#2a7e2a"/><rect x="116" y="1" width="1" height="1.5" fill="#2a7e2a"/><rect x="121" y="1" width="1" height="1.5" fill="#2a7e2a"/><rect x="126" y="1" width="1" height="1.5" fill="#2a7e2a"/><rect x="131" y="1" width="1" height="1.5" fill="#2a7e2a"/><rect x="136" y="1" width="1" height="1.5" fill="#2a7e2a"/><rect x="141" y="1" width="1" height="1.5" fill="#2a7e2a"/><rect x="146" y="1" width="1" height="1.5" fill="#2a7e2a"/><rect x="151" y="1" width="1" height="1.5" fill="#2a7e2a"/><rect x="156" y="1" width="1" height="5" fill="#3aa03a"/><rect x="161" y="1" width="1" height="1.5" fill="#2a7e2a"/><rect x="166" y="1" width="1" height="1.5" fill="#2a7e2a"/><rect x="171" y="1" width="1" height="1.5" fill="#2a7e2a"/><rect x="176" y="1" width="1" height="1.5" fill="#2a7e2a"/><rect x="181" y="1" width="1" height="1.5" fill="#2a7e2a"/><rect x="186" y="1" width="1" height="1.5" fill="#2a7e2a"/><rect x="191" y="1" width="1" height="1.5" fill="#2a7e2a"/><rect x="196" y="1" width="1" height="1.5" fill="#2a7e2a"/><rect x="201" y="1" width="1" height="1.5" fill="#2a7e2a"/><rect x="206" y="1" width="1" height="5" fill="#3aa03a"/><rect x="211" y="1" width="1" height="1.5" fill="#2a7e2a"/><rect x="216" y="1" width="1" height="1.5" fill="#2a7e2a"/><rect x="221" y="1" width="1" height="1.5" fill="#2a7e2a"/><rect x="226" y="1" width="1" height="1.5" fill="#2a7e2a"/><rect x="231" y="1" width="1" height="1.5" fill="#2a7e2a"/><rect x="236" y="1" width="1" height="1.5" fill="#2a7e2a"/><rect x="241" y="1" width="1" height="1.5" fill="#2a7e2a"/><rect x="246" y="1" width="1" height="1.5" fill="#2a7e2a"/><rect x="251" y="1" width="1" height="1.5" fill="#2a7e2a"/><rect x="257" y="1" width="1" height="5" fill="#3aa03a"/><rect x="262" y="1" width="1" height="1.5" fill="#2a7e2a"/><rect x="267" y="1" width="1" height="1.5" fill="#2a7e2a"/><rect x="272" y="1" width="1" height="1.5" fill="#2a7e2a"/><rect x="277" y="1" width="1" height="1.5" fill="#2a7e2a"/><rect x="282" y="1" width="1" height="1.5" fill="#2a7e2a"/><rect x="287" y="1" width="1" height="1.5" fill="#2a7e2a"/><rect x="292" y="1" width="1" height="1.5" fill="#2a7e2a"/><rect x="297" y="1" width="1" height="1.5" fill="#2a7e2a"/><rect x="302" y="1" width="1" height="1.5" fill="#2a7e2a"/><text x="4.00" y="11" font-family="Liberation Sans" font-size="6" fill="#3ec03e" textLength="3.1" lengthAdjust="spacingAndGlyphs">0</text><text x="53.30" y="11" font-family="Liberation Sans" font-size="6" fill="#3ec03e" textLength="6.2" lengthAdjust="spacingAndGlyphs">50</text><text x="103.60" y="11" font-family="Liberation Sans" font-size="6" fill="#3ec03e" textLength="9.3" lengthAdjust="spacingAndGlyphs">100</text><text x="153.90" y="11" font-family="Liberation Sans" font-size="6" fill="#3ec03e" textLength="9.3" lengthAdjust="spacingAndGlyphs">150</text><text x="204.20" y="11" font-family="Liberation Sans" font-size="6" fill="#3ec03e" textLength="9.3" lengthAdjust="spacingAndGlyphs">200</text><text x="254.50" y="11" font-family="Liberation Sans" font-size="6" fill="#3ec03e" textLength="9.3" lengthAdjust="spacingAndGlyphs">250</text><text x="292.00" y="11" font-family="Liberation Sans" font-size="5.5" fill="#3ec03e">msc</text><rect x="55" y="12" width="1" height="247" fill="#688468"/><rect x="106" y="12" width="1" height="247" fill="#688468"/><rect x="156" y="12" width="1" height="247" fill="#688468"/><rect x="207" y="12" width="1" height="247" fill="#688468"/><rect x="257" y="12" width="1" height="247" fill="#688468"/><rect x="5" y="12" width="303" height="1" fill="#a0b848"/><rect x="5" y="12" width="1" height="247" fill="#9aa848"/><rect x="6" y="23" width="302" height="1" fill="#3cc03c"/><rect x="6" y="35" width="302" height="1" fill="#3cc03c"/><rect x="6" y="38.5" width="302" height="1" fill="#a82c12" shape-rendering="auto"/><rect x="6" y="55" width="302" height="1" fill="#a0b8a0"/><rect x="6" y="63" width="302" height="1" fill="#3cc03c"/><rect x="6" y="79" width="302" height="1" fill="#7a8c7a"/><rect x="6" y="96" width="302" height="1" fill="#3cc03c"/><rect x="6" y="108" width="302" height="1" fill="#3cc03c"/><rect x="6" y="112" width="302" height="1" fill="#3cc03c"/><rect x="6" y="132" width="302" height="1" fill="#3cc03c"/><rect x="6" y="144" width="302" height="1" fill="#8e3012"/><rect x="6" y="156" width="302" height="1" fill="#8e3012"/><rect x="6" y="168" width="302" height="1" fill="#8e3012"/><rect x="6" y="172" width="302" height="1" fill="#3cc03c"/><rect x="6" y="192" width="302" height="1" fill="#8e3012"/><rect x="6" y="196" width="302" height="1" fill="#8e3012"/><rect x="6" y="216" width="302" height="1" fill="#8e3012"/><rect x="6" y="220" width="302" height="1" fill="#3cc03c"/><rect x="6" y="241" width="302" height="1" fill="#3cc03c"/><rect x="6" y="245" width="302" height="1" fill="#3cc03c"/><rect x="6" y="257" width="302" height="1" fill="#3cc03c"/><rect x="58" y="27" width="1" height="8" fill="#40e040"/><rect x="75" y="27" width="1" height="8" fill="#40e040"/><rect x="126" y="27" width="1" height="8" fill="#40e040"/><rect x="194" y="27" width="1" height="8" fill="#40e040"/><rect x="228" y="27" width="1" height="8" fill="#40e040"/><rect x="295" y="27" width="1" height="8" fill="#40e040"/><rect x="28" y="136" width="1" height="8" fill="#e02c18"/><rect x="55" y="136" width="1" height="8" fill="#e02c18"/><rect x="78" y="136" width="1" height="8" fill="#e02c18"/><rect x="87" y="136" width="1" height="8" fill="#e02c18"/><rect x="89" y="136" width="1" height="8" fill="#e02c18"/><rect x="93" y="136" width="1" height="8" fill="#e02c18"/><rect x="115" y="136" width="1" height="8" fill="#e02c18"/><rect x="118" y="136" width="1" height="8" fill="#e02c18"/><rect x="120" y="136" width="1" height="8" fill="#e02c18"/><rect x="129" y="136" width="1" height="8" fill="#e02c18"/><rect x="130" y="136" width="1" height="8" fill="#e02c18"/><rect x="135" y="136" width="1" height="8" fill="#e02c18"/><rect x="162" y="136" width="1" height="8" fill="#e02c18"/><rect x="166" y="136" width="1" height="8" fill="#e02c18"/><rect x="168" y="136" width="1" height="8" fill="#e02c18"/><rect x="172" y="136" width="1" height="8" fill="#e02c18"/><rect x="174" y="136" width="1" height="8" fill="#e02c18"/><rect x="193" y="136" width="1" height="8" fill="#e02c18"/><rect x="210" y="136" width="1" height="8" fill="#e02c18"/><rect x="224" y="136" width="1" height="8" fill="#e02c18"/><rect x="228" y="136" width="1" height="8" fill="#e02c18"/><rect x="251" y="136" width="1" height="8" fill="#e02c18"/><rect x="258" y="136" width="1" height="8" fill="#e02c18"/><rect x="272" y="136" width="1" height="8" fill="#e02c18"/><rect x="279" y="136" width="1" height="8" fill="#e02c18"/><rect x="291" y="136" width="1" height="8" fill="#e02c18"/><rect x="307" y="136" width="1" height="8" fill="#e02c18"/><rect x="13" y="148" width="1" height="8" fill="#e02c18"/><rect x="54" y="148" width="1" height="8" fill="#e02c18"/><rect x="57" y="148" width="1" height="8" fill="#e02c18"/><rect x="88" y="148" width="1" height="8" fill="#e02c18"/><rect x="93" y="148" width="1" height="8" fill="#e02c18"/><rect x="115" y="148" width="1" height="8" fill="#e02c18"/><rect x="129" y="148" width="1" height="8" fill="#e02c18"/><rect x="130" y="148" width="1" height="8" fill="#e02c18"/><rect x="174" y="148" width="1" height="8" fill="#e02c18"/><rect x="193" y="148" width="1" height="8" fill="#e02c18"/><rect x="228" y="148" width="1" height="8" fill="#e02c18"/><rect x="251" y="148" width="1" height="8" fill="#e02c18"/><rect x="258" y="148" width="1" height="8" fill="#e02c18"/><rect x="288" y="148" width="1" height="8" fill="#e02c18"/><rect x="291" y="148" width="1" height="8" fill="#e02c18"/><rect x="5" y="160" width="1" height="8" fill="#e02c18"/><rect x="13" y="160" width="1" height="8" fill="#e02c18"/><rect x="28" y="160" width="1" height="8" fill="#e02c18"/><rect x="54" y="160" width="1" height="8" fill="#e02c18"/><rect x="57" y="160" width="1" height="8" fill="#e02c18"/><rect x="59" y="160" width="1" height="8" fill="#e02c18"/><rect x="69" y="160" width="1" height="8" fill="#e02c18"/><rect x="78" y="160" width="1" height="8" fill="#e02c18"/><rect x="87" y="160" width="1" height="8" fill="#e02c18"/><rect x="89" y="160" width="1" height="8" fill="#e02c18"/><rect x="93" y="160" width="1" height="8" fill="#e02c18"/><rect x="103" y="160" width="1" height="8" fill="#e02c18"/><rect x="115" y="160" width="1" height="8" fill="#e02c18"/><rect x="118" y="160" width="1" height="8" fill="#e02c18"/><rect x="120" y="160" width="1" height="8" fill="#e02c18"/><rect x="129" y="160" width="1" height="8" fill="#e02c18"/><rect x="130" y="160" width="1" height="8" fill="#e02c18"/><rect x="135" y="160" width="1" height="8" fill="#e02c18"/><rect x="162" y="160" width="1" height="8" fill="#e02c18"/><rect x="169" y="160" width="1" height="8" fill="#e02c18"/><rect x="172" y="160" width="1" height="8" fill="#e02c18"/><rect x="174" y="160" width="1" height="8" fill="#e02c18"/><rect x="193" y="160" width="1" height="8" fill="#e02c18"/><rect x="210" y="160" width="1" height="8" fill="#e02c18"/><rect x="228" y="160" width="1" height="8" fill="#e02c18"/><rect x="242" y="160" width="1" height="8" fill="#e02c18"/><rect x="251" y="160" width="1" height="8" fill="#e02c18"/><rect x="258" y="160" width="1" height="8" fill="#e02c18"/><rect x="272" y="160" width="1" height="8" fill="#e02c18"/><rect x="279" y="160" width="1" height="8" fill="#e02c18"/><rect x="288" y="160" width="1" height="8" fill="#e02c18"/><rect x="291" y="160" width="1" height="8" fill="#e02c18"/><rect x="307" y="160" width="1" height="8" fill="#e02c18"/><rect x="92" y="184" width="1" height="8" fill="#e02c18"/><rect x="176" y="184" width="1" height="8" fill="#e02c18"/><rect x="89" y="209" width="1" height="7" fill="#e02c18"/><rect x="92" y="209" width="1" height="7" fill="#e02c18"/><rect x="104" y="209" width="1" height="7" fill="#e02c18"/><rect x="115" y="209" width="1" height="7" fill="#e02c18"/><rect x="117" y="209" width="1" height="7" fill="#e02c18"/><rect x="129" y="209" width="1" height="7" fill="#e02c18"/><rect x="165" y="209" width="1" height="7" fill="#e02c18"/><rect x="193" y="209" width="1" height="7" fill="#e02c18"/><rect x="224" y="209" width="1" height="7" fill="#e02c18"/><rect x="288" y="209" width="1" height="7" fill="#e02c18"/><rect x="290" y="209" width="1" height="7" fill="#e02c18"/></svg>
<div class="a" style="left:582px;top:70px;width:5px;height:259px;background:#050505"></div>
<div class="a" style="left:587px;top:70.5px;width:9.8px;height:259.5px;background:#f6f6f6"></div>
<div class="a" style="left:588px;top:80px;width:7px;height:8px;background:#d8d8d8"></div>
<svg class="a" style="left:589.5px;top:74px" width="5" height="3" viewBox="0 0 5 3"><path d="M0.5 2.5L2.5 0.5L4.5 2.5" stroke="#444" stroke-width="1" fill="none"/></svg>
<svg class="a" style="left:589.5px;top:323.5px" width="5" height="3" viewBox="0 0 5 3"><path d="M0.5 0.5L2.5 2.5L4.5 0.5" stroke="#444" stroke-width="1" fill="none"/></svg>
<div class="a" style="left:96.5px;top:330px;width:500.3px;height:9px;background:#f0f0f0"></div>
<div class="a" style="left:96.5px;top:331px;width:49px;height:8.7px;background:#f0f0f0;border:1px solid #dadada"></div>
<div class="t" w="18" style="left:97px;top:332.3px;font-size:7px;color:#222">10000</div>
<div class="a" style="left:146px;top:331px;width:50px;height:8.7px;background:#ececec;border:1px solid #d4d4d4"></div>
<div class="t" w="14.5" style="left:149.2px;top:332.2px;font-size:7px;color:#222">待機中</div>
<div class="a" style="left:197px;top:331px;width:151.5px;height:8.7px;background:#062606"></div>
<div class="t" w="19" style="left:199px;top:332px;font-size:6.5px;color:#a8b8a8">Notes...</div>
<div class="a" style="left:228px;top:334.5px;width:10px;height:1px;background:#c03020"></div>
<div class="t" w="23" style="left:246px;top:332px;font-size:6.5px;color:#889a88">OUTPUT</div>
<div class="a" style="left:276px;top:334.5px;width:8px;height:1px;background:#40c040"></div>
<div class="t" w="23" style="left:290px;top:332px;font-size:6.5px;color:#889a88">INPUT</div>
<div class="a" style="left:321px;top:334.5px;width:8px;height:1px;background:#a0b0a0"></div>
<div class="t" w="12" style="left:333.5px;top:332px;font-size:6.5px;color:#889a88">HI-Z</div>
<div class="a" style="left:348.5px;top:331px;width:247px;height:8px;background:#eeeeee;border:1px solid #d8d8d8"></div>
<div class="a" style="left:96.5px;top:339px;width:500.3px;height:8.5px;background:#f7f7f7"></div>
<div class="a" style="left:96.5px;top:339.5px;width:8px;height:8px;background:#f4f4f4;border-right:1px solid #d8d8d8"></div>
<svg class="a" style="left:98.8px;top:341.8px" width="3" height="4" viewBox="0 0 3 4"><path d="M3 0L0 2L3 4Z" fill="#222"/></svg>
<div class="a" style="left:104.5px;top:339.5px;width:7px;height:8px;background:#f0f0f0;border-right:1px solid #d0d0d0"></div>
<div class="a" style="left:588px;top:339.5px;width:8px;height:8px;background:#f2f2f2;border-bottom:1px solid #999"></div>
<svg class="a" style="left:591px;top:341.5px" width="3" height="4" viewBox="0 0 3 4"><path d="M0.3 0L2.8 2L0.3 4Z" fill="#222"/></svg>
<div class="a" style="left:96.5px;top:347.5px;width:500.3px;height:10px;background:#f0f0f0"></div>
<div class="a" style="left:98px;top:347.5px;width:42px;height:9px;background:#f0f0f0;border:1px solid #c4c4c4;border-top:none"></div>
<svg class="a" style="left:100.5px;top:348.5px" width="8" height="8" viewBox="0 0 8 8"><rect width="8" height="8" fill="#c8bcb4"/><rect x="1" y="1" width="3" height="3" fill="#968a84"/><path d="M2 7L6 2" stroke="#eee"/><rect x="5" y="5" width="2" height="2" fill="#d09090"/></svg>
<div class="t" w="24.5" style="left:110.8px;top:349.3px;font-size:7.5px;color:#222">MainView</div>
<div class="a" style="left:139.5px;top:347.5px;width:60px;height:10px;background:#fafafa;border:1px solid #b8b8b8;border-top:none"></div>
<svg class="a" style="left:142px;top:348.8px" width="8" height="8" viewBox="0 0 8 8"><rect width="8" height="8" fill="#f0f0e0" stroke="#999" stroke-width="0.6"/><rect x="1" y="3" width="6" height="5" fill="#58b848"/><path d="M5 0L8 2" stroke="#e04040"/></svg>
<div class="t" w="42.6" style="left:152.7px;top:350px;font-size:7.5px;color:#222">noname.jla(変更)</div>
<div class="a" style="left:94px;top:357.5px;width:502.8px;height:1px;background:#c4c4c4"></div>
<svg class="a" style="left:0;top:0" width="600" height="448"><ellipse cx="129.3" cy="58.5" rx="44.8" ry="18.4" fill="none" stroke="#e01010" stroke-width="3.7" transform="rotate(-1 129.3 58.5)"/><ellipse cx="204.05" cy="45.25" rx="11.25" ry="12.45" fill="none" stroke="#e01010" stroke-width="3.2"/></svg>
</div>
<script>
(function(){var els=document.querySelectorAll('[w]');for(var i=0;i<els.length;i++){var e=els[i];var tw=parseFloat(e.getAttribute('w'));var r=e.getBoundingClientRect().width;if(r>0){e.style.transformOrigin='0 0';e.style.transform='scaleX('+(tw/r)+')';}}})();
</script>
</body></html>
